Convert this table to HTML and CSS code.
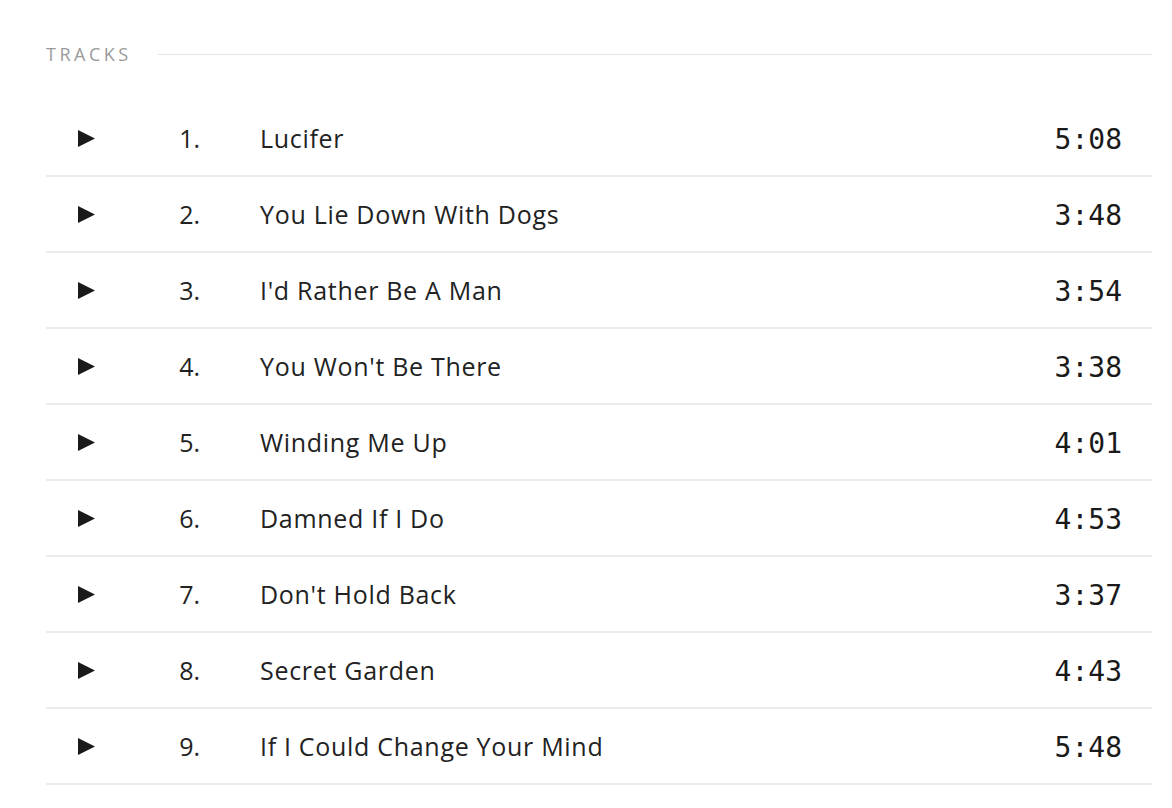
FILE: index.html
```html
<!DOCTYPE html>
<html>
<head>
  <title>Tracks</title>
  <link rel="stylesheet" href="styles.css">
</head>
<body>
  <div class="tracks">
    <div class="tracks-header">
      <span class="tracks-label">TRACKS</span>
      <span class="tracks-rule"></span>
    </div>
    <ul class="track-list">
      <li class="track"><svg class="play" viewBox="0 0 17 17"><path d="M0 0 L17 8.5 L0 17 Z"/></svg><span class="num">1.</span><span class="title">Lucifer</span><span class="time">5:08</span></li>
      <li class="track"><svg class="play" viewBox="0 0 17 17"><path d="M0 0 L17 8.5 L0 17 Z"/></svg><span class="num">2.</span><span class="title">You Lie Down With Dogs</span><span class="time">3:48</span></li>
      <li class="track"><svg class="play" viewBox="0 0 17 17"><path d="M0 0 L17 8.5 L0 17 Z"/></svg><span class="num">3.</span><span class="title">I'd Rather Be A Man</span><span class="time">3:54</span></li>
      <li class="track"><svg class="play" viewBox="0 0 17 17"><path d="M0 0 L17 8.5 L0 17 Z"/></svg><span class="num">4.</span><span class="title">You Won't Be There</span><span class="time">3:38</span></li>
      <li class="track"><svg class="play" viewBox="0 0 17 17"><path d="M0 0 L17 8.5 L0 17 Z"/></svg><span class="num">5.</span><span class="title">Winding Me Up</span><span class="time">4:01</span></li>
      <li class="track"><svg class="play" viewBox="0 0 17 17"><path d="M0 0 L17 8.5 L0 17 Z"/></svg><span class="num">6.</span><span class="title">Damned If I Do</span><span class="time">4:53</span></li>
      <li class="track"><svg class="play" viewBox="0 0 17 17"><path d="M0 0 L17 8.5 L0 17 Z"/></svg><span class="num">7.</span><span class="title">Don't Hold Back</span><span class="time">3:37</span></li>
      <li class="track"><svg class="play" viewBox="0 0 17 17"><path d="M0 0 L17 8.5 L0 17 Z"/></svg><span class="num">8.</span><span class="title">Secret Garden</span><span class="time">4:43</span></li>
      <li class="track"><svg class="play" viewBox="0 0 17 17"><path d="M0 0 L17 8.5 L0 17 Z"/></svg><span class="num">9.</span><span class="title">If I Could Change Your Mind</span><span class="time">5:48</span></li>
    </ul>
  </div>
</body>
</html>
```

FILE: styles.css
```css
body {
  margin: 0;
  background-color: #ffffff;
  font-family: "Open Sans", "Liberation Sans", sans-serif;
  color: #222222;
}

.tracks {
  width: 1106px;
  margin-left: 46px;
}

.tracks-header {
  display: flex;
  align-items: center;
  height: 30px;
  margin-top: 39px;
  margin-bottom: 32px;
}

.tracks-label {
  font-size: 18px;
  letter-spacing: 3.5px;
  color: #9a9a9a;
}

.tracks-rule {
  flex: 1;
  height: 1px;
  margin-left: 26px;
  background-color: #e6e6e6;
}

.track-list {
  list-style: none;
  margin: 0;
  padding: 0;
}

.track {
  display: grid;
  grid-template-columns: 17px 105px 1fr auto;
  align-items: center;
  height: 74px;
  padding: 0 30px 0 32px;
  border-bottom: 2px solid #ebebeb;
}

.play {
  width: 17px;
  height: 17px;
  fill: #1a1a1a;
}

.num {
  text-align: right;
  font-size: 25px;
}

.title {
  padding-left: 60px;
  font-size: 25px;
  letter-spacing: 0.7px;
}

.time {
  padding-top: 2px;
  font-family: "DejaVu Sans Mono", monospace;
  font-size: 28px;
  color: #1a1a1a;
}
```
